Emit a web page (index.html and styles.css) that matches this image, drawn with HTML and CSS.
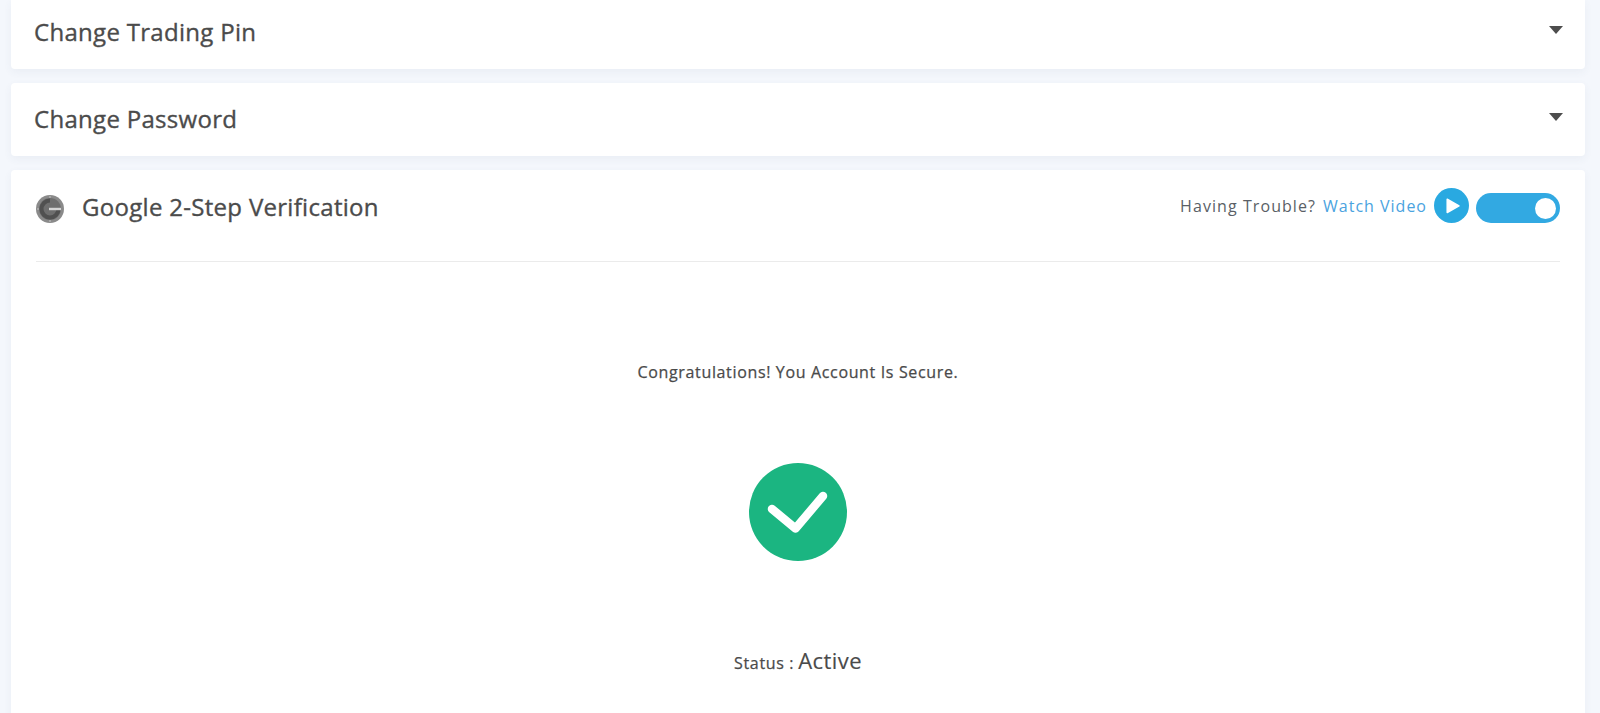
FILE: index.html
```html
<!DOCTYPE html>
<html lang="en">
<head>
<meta charset="utf-8">
<title>Security Settings</title>
<link rel="stylesheet" href="styles.css">
</head>
<body>
<main class="page">
  <section class="card accordion first">
    <h2 class="title">Change Trading Pin</h2>
    <span class="caret"></span>
  </section>
  <section class="card accordion second">
    <h2 class="title">Change Password</h2>
    <span class="caret"></span>
  </section>
  <section class="card panel">
    <header class="panel-head">
      <div class="panel-title">
        <svg class="auth-icon" viewBox="0 0 28 28" aria-hidden="true">
          <circle cx="14" cy="14" r="14" fill="#8a8a8a"/>
          <circle cx="14" cy="14" r="11" fill="#6e6e6e"/>
          <path d="M14 5.5a8.5 8.5 0 1 0 8.5 8.5" fill="none" stroke="#505050" stroke-width="4"/>
          <rect x="13" y="12.8" width="12" height="2.4" fill="#d4d4d4"/>
          <circle cx="14" cy="2" r="1" fill="#b0b0b0"/>
          <circle cx="2" cy="14" r="1" fill="#b0b0b0"/>
          <circle cx="14" cy="26" r="1" fill="#b0b0b0"/>
        </svg>
        <h2 class="title">Google 2-Step Verification</h2>
      </div>
      <div class="panel-actions">
        <span class="trouble">Having Trouble?</span>
        <a class="watch" href="#">Watch Video</a>
        <svg class="play" viewBox="0 0 35 35" aria-hidden="true">
          <circle cx="17.5" cy="17.5" r="17.5" fill="#29a9e1"/>
          <path d="M13.2 11.2 L25 17.8 L13.2 24.5 Z" fill="#fff" stroke="#fff" stroke-width="1.5" stroke-linejoin="round"/>
        </svg>
        <span class="toggle"><span class="knob"></span></span>
      </div>
    </header>
    <div class="panel-body">
      <p class="message">Congratulations! You Account Is Secure.</p>
      <svg class="check" viewBox="0 0 98 98" aria-hidden="true">
        <circle cx="49" cy="49" r="49" fill="#1bb581"/>
        <path d="M23 46 L46.5 65.5 L74 33" fill="none" stroke="#fff" stroke-width="8.5" stroke-linecap="round" stroke-linejoin="round"/>
      </svg>
      <p class="status"><span class="status-label">Status :</span> <span class="status-value">Active</span></p>
    </div>
  </section>
</main>
</body>
</html>
```
FILE: styles.css
```css
* { box-sizing: border-box; }
html, body { margin: 0; height: 713px; overflow: hidden; }
body {
  background: #f4f7fc;
  font-family: "Open Sans", "Noto Sans", sans-serif;
  color: #4a4a4a;
}
.page {
  display: flex;
  flex-direction: column;
  gap: 14px;
  padding: 0 15px 0 11px;
}
.card {
  background: #fff;
  border-radius: 4px;
  box-shadow: 0 3px 8px rgba(60, 80, 120, 0.06);
}
.accordion {
  display: flex;
  justify-content: space-between;
  padding: 0 22px 0 23px;
}
.first { height: 69px; border-radius: 0 0 4px 4px; padding-top: 12px; }
.second { height: 73px; padding-top: 16px; }
.title {
  margin: 0;
  font-size: 24px;
  line-height: 40px;
  font-weight: 400;
  letter-spacing: 0.3px;
  -webkit-text-stroke: 0.35px #4b4b4b;
  color: #4b4b4b;
}
.caret {
  width: 0;
  height: 0;
  border-left: 7px solid transparent;
  border-right: 7px solid transparent;
  border-top: 8px solid #4d4d4d;
}
.first .caret { margin-top: 14px; }
.second .caret { margin-top: 14px; }
.panel { height: 560px; padding: 0 25px; }
.panel-head {
  display: flex;
  justify-content: space-between;
  align-items: center;
  height: 92px;
  padding-top: 2px;
  border-bottom: 1px solid #ebebeb;
}
.panel-title { display: flex; align-items: center; gap: 18px; margin-bottom: 19px; }
.auth-icon { width: 28px; height: 28px; margin-top: 4px; display: block; }
.panel-actions { display: flex; align-items: center; margin-bottom: 22px; font-size: 16px; letter-spacing: 1px; }
.trouble { color: #5a5f66; letter-spacing: 1.07px; }
.watch { color: #4aa3e0; text-decoration: none; margin-left: 7px; }
.play { width: 35px; height: 35px; margin-left: 7px; display: block; }
.toggle {
  display: flex;
  align-items: center;
  justify-content: flex-end;
  align-self: flex-end;
  width: 84px;
  height: 30px;
  margin-left: 7px;
  padding-right: 4px;
  border-radius: 15px;
  background: #32a9e2;
}
.knob { width: 21px; height: 21px; border-radius: 50%; background: #fff; }
.panel-body {
  display: flex;
  flex-direction: column;
  align-items: center;
}
.message {
  margin: 99px 0 0;
  font-size: 16px;
  line-height: 22px;
  letter-spacing: 0.65px;
  -webkit-text-stroke: 0.25px #4a4a4a;
  color: #4a4a4a;
}
.check { width: 98px; height: 98px; margin-top: 80px; display: block; }
.status { margin: 84px 0 0; line-height: 30px; }
.status-label { font-size: 16px; letter-spacing: 0.65px; -webkit-text-stroke: 0.25px #4a4a4a; }
.status-value { font-size: 22px; letter-spacing: 0.4px; -webkit-text-stroke: 0.15px #4a4a4a; }
```
